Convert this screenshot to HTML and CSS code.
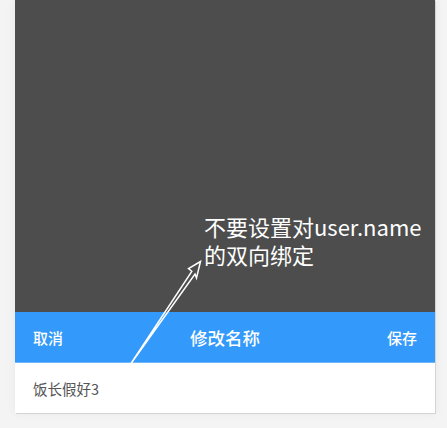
FILE: index.html
```html
<!DOCTYPE html>
<html lang="zh">
<head>
<meta charset="utf-8">
<title>修改名称</title>
<link rel="stylesheet" href="styles.css">
</head>
<body>
<div class="card">
  <div class="mask"></div>
  <div class="bar">
    <span class="bar-btn">取消</span>
    <span class="bar-title">修改名称</span>
    <span class="bar-btn bar-btn-right">保存</span>
  </div>
  <div class="row">饭长假好3</div>
  <div class="note">
    <div class="note-line">不要设置对user.name</div>
    <div class="note-line">的双向绑定</div>
  </div>
  <svg class="arrow" width="420" height="413" viewBox="15 0 420 413" xmlns="http://www.w3.org/2000/svg">
    <polygon points="200.5,261.5 188.5,268.5 191.8,271.3 131,363.5 195,274 196.5,278" fill="none" stroke="#ffffff" stroke-width="1.5" stroke-linejoin="miter"/>
  </svg>
</div>
</body>
</html>
```

FILE: styles.css
```css
html, body {
  margin: 0;
  padding: 0;
  background: #f4f4f4;
}
body {
  font-family: "Noto Sans CJK SC", "Noto Sans", sans-serif;
  width: 447px;
  height: 428px;
  overflow: hidden;
}
.card {
  position: relative;
  margin-left: 15px;
  width: 420px;
  background: #ffffff;
  box-shadow: 1px 1px 0 #d4d4d4, 0 0 10px rgba(0, 0, 0, 0.06);
  overflow: hidden;
}
.mask {
  height: 312px;
  background: #4d4d4d;
}
.bar {
  height: 50px;
  background: #3399fa;
  border-bottom: 1px solid #6cb6fb;
  display: grid;
  grid-template-columns: 1fr auto 1fr;
  align-items: center;
  padding: 0 18px;
  color: #ffffff;
}
.bar-btn {
  font-size: 15px;
  font-weight: 500;
}
.bar-btn-right {
  justify-self: end;
}
.bar-title {
  font-size: 17.5px;
  font-weight: 500;
}
.row {
  height: 50px;
  line-height: 52px;
  padding-left: 18px;
  font-size: 14.5px;
  color: #555555;
}
.note {
  position: absolute;
  left: 189px;
  top: 212px;
  font-size: 22px;
  color: #ffffff;
  white-space: nowrap;
}
.note-line {
  height: 28px;
  line-height: 28px;
}
.arrow {
  position: absolute;
  left: 0;
  top: 0;
}
```
